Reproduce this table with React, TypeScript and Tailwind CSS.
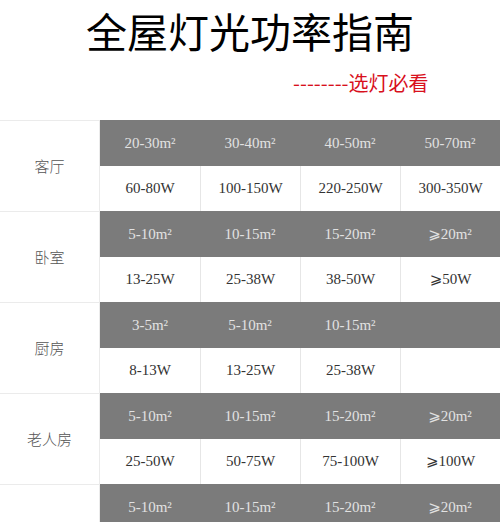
const sections = [
  {
    room: "客厅",
    areas: ["20-30m²", "30-40m²", "40-50m²", "50-70m²"],
    watts: ["60-80W", "100-150W", "220-250W", "300-350W"],
  },
  {
    room: "卧室",
    areas: ["5-10m²", "10-15m²", "15-20m²", "⩾20m²"],
    watts: ["13-25W", "25-38W", "38-50W", "⩾50W"],
  },
  {
    room: "厨房",
    areas: ["3-5m²", "5-10m²", "10-15m²", ""],
    watts: ["8-13W", "13-25W", "25-38W", ""],
  },
  {
    room: "老人房",
    areas: ["5-10m²", "10-15m²", "15-20m²", "⩾20m²"],
    watts: ["25-50W", "50-75W", "75-100W", "⩾100W"],
  },
  {
    room: "儿童房",
    areas: ["5-10m²", "10-15m²", "15-20m²", "⩾20m²"],
    watts: ["13-25W", "25-38W", "38-50W", "⩾50W"],
  },
]

const cjk = "font-['Noto_Sans_CJK_SC',sans-serif]"
const serif = "font-['Liberation_Serif','DejaVu_Serif','DejaVu_Sans','Noto_Sans_CJK_SC',serif]"

export default function App() {
  return (
    <div className="w-[500px] h-[522px] overflow-hidden bg-white">
      {/* Title */}
      <div className="h-[120px]">
        <h1 className={`${cjk} pt-[6px] text-center text-[41px] leading-[48px] font-normal text-black`}>
          全屋灯光功率指南
        </h1>
        <p className={`${cjk} mt-[17px] pl-[293px] text-[20px] leading-[24px] text-[#d8101c]`}>
          --------选灯必看
        </p>
      </div>

      {/* Table */}
      {sections.map((s) => (
        <div key={s.room} className="grid grid-cols-[100px_repeat(4,100px)] grid-rows-[45.5px_45.5px]">
          <div
            className={`${cjk} row-span-2 flex items-center justify-center border-t border-r border-[#ebebeb] text-[15px] font-light text-[#555]`}
          >
            {s.room}
          </div>
          {s.areas.map((a, i) => (
            <div
              key={"a" + i}
              className={`${serif} flex items-center justify-center bg-[#7b7b7b] text-[15px] text-[#e2e2e2]`}
            >
              {a}
            </div>
          ))}
          {s.watts.map((w, i) => (
            <div
              key={"w" + i}
              className={`${serif} flex items-center justify-center text-[15px] text-[#333] ${
                i > 0 ? "border-l border-[#e6e6e6]" : ""
              }`}
            >
              {w}
            </div>
          ))}
        </div>
      ))}
    </div>
  )
}
